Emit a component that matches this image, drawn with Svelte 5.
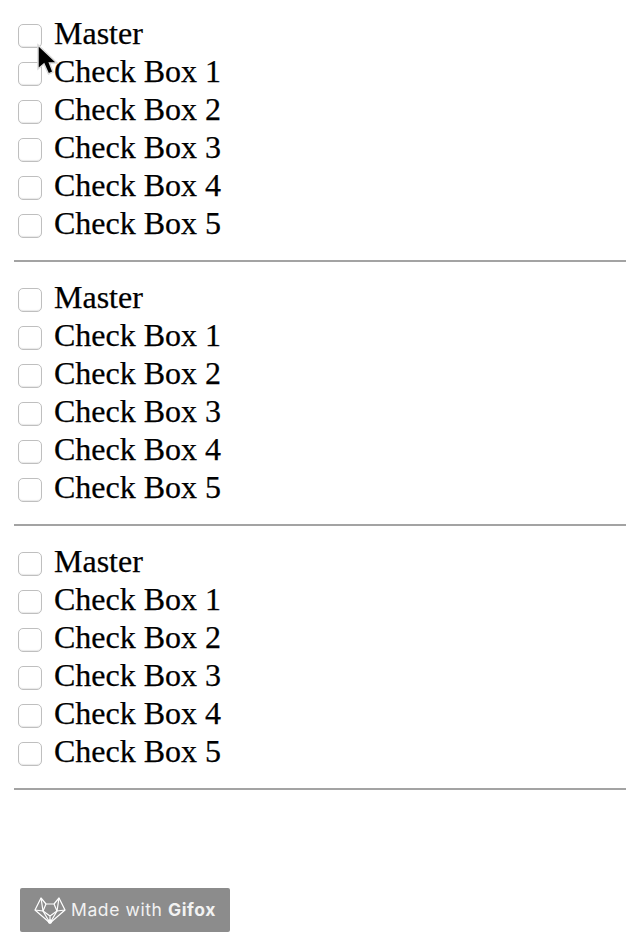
<script>
  const groups = [1, 2, 3];
  const boxes = ['Master', 'Check Box 1', 'Check Box 2', 'Check Box 3', 'Check Box 4', 'Check Box 5'];
</script>

<div class="page">
  {#each groups as group}
    <div class="group">
      {#each boxes as box}
        <label class="row">
          <input type="checkbox" />
          <span>{box}</span>
        </label>
      {/each}
    </div>
    <hr />
  {/each}

  <div class="badge">
    <svg class="fox" width="32" height="28" viewBox="0 0 32 28" fill="none" stroke="#fff" stroke-width="1.2" stroke-linejoin="round">
      <path d="M1 14 L7 2 L12 8 L20 8 L25 2 L31 14 L16 27 Z" />
      <path d="M7 2 L9 15 L16 27 L23 15 L25 2" />
      <path d="M1 14 L9 15 L12 8 M31 14 L23 15 L20 8" />
      <path d="M9 15 L16 20 L23 15 M16 20 L16 27" />
      <circle cx="16" cy="25.5" r="2.2" fill="#fff" stroke="none" />
    </svg>
    <span>Made with <b>Gifox</b></span>
  </div>

  <svg class="cursor" width="26" height="36" viewBox="0 0 26 36">
    <path d="M2 2 L2 26 L8 21 L12.5 31 L17 29 L13.5 20 L21 20 Z" fill="#000" stroke="#dcdcdc" stroke-width="1.5" />
  </svg>
</div>

<style>
  :global(body) {
    margin: 0;
    background: #fff;
  }

  .page {
    position: relative;
    padding: 15px 0 0 14px;
    height: 937px;
    font-family: "Liberation Serif", serif;
    color: #000;
  }

  .row {
    display: flex;
    align-items: center;
    height: 38px;
    font-size: 32px;
  }

  .row span {
    margin-bottom: 2px;
    -webkit-text-stroke: 0.25px #000;
  }

  .row input {
    appearance: none;
    box-sizing: border-box;
    width: 24px;
    height: 24px;
    margin: 4px 12px 0 4px;
    background: #fff;
    border: 1.5px solid #bfbfbf;
    border-radius: 5px;
    box-shadow: inset 0 -1px 1px #e8e8e8;
  }

  hr {
    height: 2px;
    margin: 17px 0;
    border: none;
    background: #a3a3a3;
  }

  .badge {
    display: flex;
    align-items: center;
    gap: 5px;
    box-sizing: border-box;
    width: 210px;
    height: 44px;
    margin: 98px 0 0 6px;
    padding: 0 0 2px 14px;
    background: #8c8c8c;
    border-radius: 2px;
    color: #f2f2f2;
    font-family: Inter, sans-serif;
    font-size: 17.5px;
    letter-spacing: 0.6px;
    white-space: nowrap;
  }

  .fox {
    flex: none;
    margin-top: 2px;
  }

  .cursor {
    position: absolute;
    left: 36px;
    top: 43px;
  }
</style>
